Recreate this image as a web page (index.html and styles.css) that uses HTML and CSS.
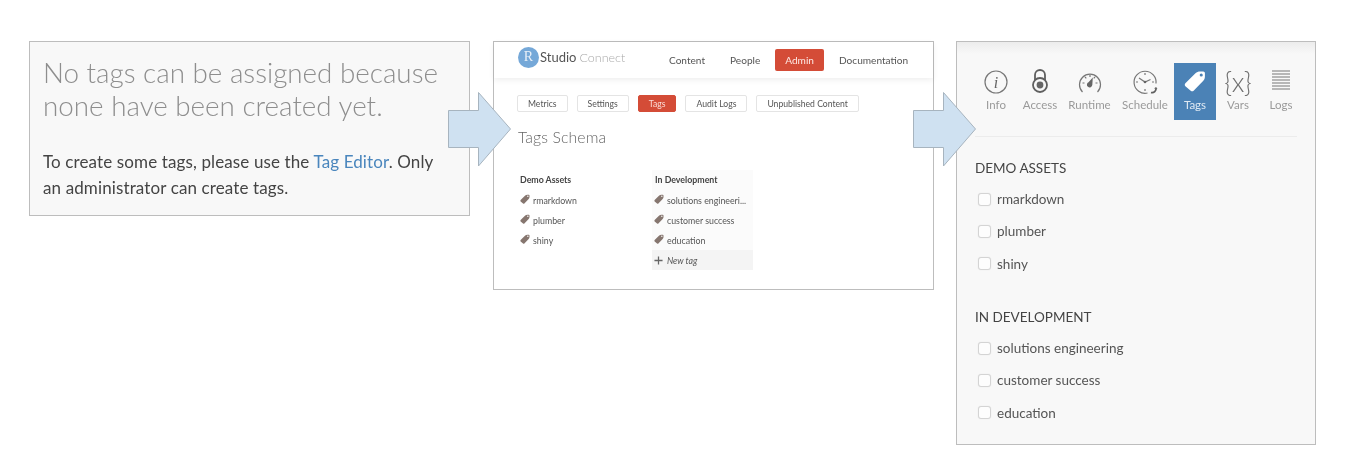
FILE: index.html
```html
<!DOCTYPE html>
<html lang="en">
<head>
<meta charset="utf-8">
<title>Tags</title>
<link rel="stylesheet" href="styles.css">
</head>
<body>
<svg width="0" height="0" class="defs">
  <defs>
    <symbol id="tag" viewBox="0 0 24 24">
      <path d="M1.500 14.500 12.500 3.500C14 2 15.500 1.500 17.500 1.500l3.500 0c1 0 1.800.8 1.800 1.800v3.700c0 2-.6 3.500-2 5L10.500 22.500c-.9.900-2.300.9-3.200 0L1.500 17.700c-.9-.9-.9-2.300 0-3.200Z" fill="currentColor"/>
      <circle cx="18.800" cy="5.500" r="1.700" class="tag-hole"/>
    </symbol>
  </defs>
</svg>
<main class="figure">
  <section class="panel empty">
    <h2 class="empty-title">No tags can be assigned because none have been created yet.</h2>
    <p class="empty-text">To create some tags, please use the <a href="#" class="link">Tag Editor</a>. Only an administrator can create tags.</p>
  </section>

  <section class="panel admin">
    <header class="topbar">
      <div class="logo"><span class="logo-r">R</span><span class="logo-studio">Studio</span><span class="logo-connect">Connect</span></div>
      <nav class="topnav">
        <span class="topnav-item first">Content</span>
        <span class="topnav-item">People</span>
        <span class="topnav-item active">Admin</span>
        <span class="topnav-item">Documentation</span>
      </nav>
    </header>
    <nav class="subnav">
      <span class="pill">Metrics</span>
      <span class="pill">Settings</span>
      <span class="pill active">Tags</span>
      <span class="pill">Audit Logs</span>
      <span class="pill">Unpublished Content</span>
    </nav>
    <h3 class="schema-title">Tags Schema</h3>
    <div class="schema">
      <div class="schema-col">
        <div class="schema-head">Demo Assets</div>
        <div class="schema-row"><svg class="mini-tag"><use href="#tag"/></svg>rmarkdown</div>
        <div class="schema-row"><svg class="mini-tag"><use href="#tag"/></svg>plumber</div>
        <div class="schema-row"><svg class="mini-tag"><use href="#tag"/></svg>shiny</div>
      </div>
      <div class="schema-col shaded">
        <div class="schema-head">In Development</div>
        <div class="schema-row"><svg class="mini-tag"><use href="#tag"/></svg>solutions engineeri...</div>
        <div class="schema-row"><svg class="mini-tag"><use href="#tag"/></svg>customer success</div>
        <div class="schema-row"><svg class="mini-tag"><use href="#tag"/></svg>education</div>
        <div class="schema-row new-tag"><svg class="plus" viewBox="0 0 10 10"><path d="M5 .5v9M.5 5h9"/></svg><em>New tag</em></div>
      </div>
    </div>
  </section>

  <section class="panel side">
    <nav class="tabs">
      <div class="tab tab-info">
        <svg class="tab-icon" viewBox="0 0 26 26"><circle cx="13" cy="13" r="11" class="ln"/><text x="13" y="18.500" class="i-glyph">i</text></svg>
        <span>Info</span>
      </div>
      <div class="tab tab-access">
        <svg class="tab-icon" viewBox="0 0 26 26"><path d="M8 11V6a5 5 0 0 1 10 0v5" class="ln thick"/><circle cx="13" cy="16" r="7" class="ln thick"/><circle cx="13" cy="16" r="3.400" class="fl"/></svg>
        <span>Access</span>
      </div>
      <div class="tab tab-runtime">
        <svg class="tab-icon" viewBox="0 0 26 26"><path d="M5.500 23a10.500 10.500 0 1 1 15 0" class="ln"/><path d="M5.500 14h2M18.500 14h2M8 8l1.300 1.300M18 8l-1.300 1.300M13 6v2" class="ln"/><path d="M15.800 8.500 15.300 16a2.700 2.700 0 1 1-3.800-2.800Z" class="fl"/></svg>
        <span>Runtime</span>
      </div>
      <div class="tab tab-schedule">
        <svg class="tab-icon" viewBox="0 0 26 26"><path d="M24 14.500A11 11 0 1 0 15.500 24" class="ln"/><path d="M7 9l6 4 5.500-2.500M13 4v2M4 13h2M20 13h2M13 20v2" class="ln"/><circle cx="13" cy="13" r="1.300" class="fl"/><path d="M19 23.500a4 4 0 0 0 5-4.500" class="ln thick"/><path d="M22 19.500l2-1.500 1.500 2Z" class="fl"/></svg>
        <span>Schedule</span>
      </div>
      <div class="tab tab-tags active">
        <svg class="tab-icon tag-icon"><use href="#tag"/></svg>
        <span>Tags</span>
      </div>
      <div class="tab tab-vars">
        <div class="vars-glyph">{x}</div>
        <span>Vars</span>
      </div>
      <div class="tab tab-logs">
        <svg class="tab-icon" viewBox="0 0 26 26"><path d="M4 2h18M4 5h18M4 8h18M4 11h18M4 14h18M4 17h18M4 20h18" class="ln"/></svg>
        <span>Logs</span>
      </div>
    </nav>
    <div class="groups">
      <div class="group">
        <h4 class="group-title">DEMO ASSETS</h4>
        <label class="check"><span class="box"></span>rmarkdown</label>
        <label class="check"><span class="box"></span>plumber</label>
        <label class="check"><span class="box"></span>shiny</label>
      </div>
      <div class="group">
        <h4 class="group-title">IN DEVELOPMENT</h4>
        <label class="check"><span class="box"></span>solutions engineering</label>
        <label class="check"><span class="box"></span>customer success</label>
        <label class="check"><span class="box"></span>education</label>
      </div>
    </div>
  </section>

  <svg class="arrow arrow-one" viewBox="0 0 64 75"><path d="M.5 18.500h30V.5L62.500 37 30.500 74V55.500H.5Z"/></svg>
  <svg class="arrow arrow-two" viewBox="0 0 64 75"><path d="M.5 18.500h30V.5L62.500 37 30.500 74V55.500H.5Z"/></svg>
</main>
</body>
</html>
```
FILE: styles.css
```css
* { box-sizing: border-box; }
html, body { margin: 0; padding: 0; background: #fff; }
body { font-family: Lato, "Open Sans", sans-serif; color: #444; width: 1345px; height: 476px; overflow: hidden; }
.defs { position: absolute; }
.tag-hole { fill: var(--hole, #fff); }
.figure { position: relative; display: flex; align-items: flex-start; gap: 23px; padding: 41px 0 0 29px; }
.panel { border: 1px solid #bdbdbd; flex: none; filter: blur(.4px); }

/* first panel */
.empty { width: 441px; height: 175px; background: #f8f8f8; padding: 14px 30px 0 13px; }
.empty-title { margin: 0 -20px 0 0; font-weight: 300; font-size: 27.800px; line-height: 33px; color: #8e8e8e; }
.empty-text { margin: 27px 0 0; font-size: 17px; line-height: 26px; color: #444; letter-spacing: .12px; }
.link { color: #4a86bd; text-decoration: none; }

/* second panel */
.admin { width: 441px; height: 249px; background: #fff; margin-right: -1px; }
.topbar { display: flex; align-items: center; height: 36px; padding: 0 0 0 24px; box-shadow: 0 2px 6px rgba(0,0,0,.07); }
.logo { display: flex; align-items: center; width: 151px; font-size: 13px; margin-top: -6px; }
.logo-r { width: 21px; height: 21px; border-radius: 50%; background: #75a8d8; color: #e8f0f8; font-family: "Liberation Serif", serif; font-size: 14px; display: flex; align-items: center; justify-content: center; margin-right: 1px; }
.logo-studio { color: #555; margin-right: 3px; }
.logo-connect { color: #aaa; font-weight: 300; font-size: 12.500px; }
.topnav { display: flex; align-items: center; gap: 15px; font-size: 10.100px; color: #555; margin-top: -1px; }
.topnav-item { height: 22px; line-height: 22px; white-space: nowrap; }
.topnav-item.first { margin-right: 10px; }
.topnav-item.active { background: #d44c37; color: #fde9e5; border-radius: 2px; padding: 0 10px; }
.subnav { display: flex; gap: 9px; padding: 17px 0 0 23px; }
.pill { height: 17px; line-height: 15px; padding: 0 10px; border: 1px solid #e4e4e4; border-radius: 2px; font-size: 8.650px; color: #555; white-space: nowrap; }
.pill.active { background: #d44c37; border-color: #d44c37; color: #fbdcd6; }
.schema-title { margin: 15px 0 0 24px; font-size: 15.800px; line-height: 19px; font-weight: 300; color: #666; letter-spacing: .1px; }
.schema { display: flex; margin: 24px 0 0 24px; }
.schema-col { width: 134px; font-size: 8.800px; color: #555; }
.schema-col.shaded { width: 101px; background: #fbfbfb; }
.schema-head { height: 20px; line-height: 20px; padding-left: 2px; font-weight: 700; color: #444; }
.shaded .schema-head { padding-left: 3px; }
.schema-row { height: 20px; display: flex; align-items: center; padding-left: 2px; white-space: nowrap; }
.mini-tag { width: 10px; height: 10px; color: #86766f; margin-right: 3px; flex: none; margin-top: -3px; }
.new-tag { background: #f4f4f4; }
.new-tag em { font-size: 8.800px; }
.plus { width: 9px; height: 9px; margin-right: 4px; stroke: #666; stroke-width: 1.400; fill: none; }

/* third panel */
.side { width: 360px; height: 404px; background: #f8f8f8; padding: 21px 18px 0 18px; background-image: linear-gradient(#ececec, #f8f8f8 12px); }
.tabs { display: flex; height: 74px; border-bottom: 1px solid #ececec; align-items: flex-start; }
.tab { display: flex; flex-direction: column; align-items: center; flex: none; height: 57px; padding-top: 6px; font-size: 11.500px; color: #9a9a9a; white-space: nowrap; }
.tab span { margin-top: 3px; line-height: 14px; }
.tab-info { width: 42px; }
.tab-access { width: 46px; }
.tab-runtime { width: 53px; }
.tab-schedule { width: 58px; }
.tab-tags { width: 42px; }
.tab-vars { width: 44px; }
.tab-logs { width: 42px; margin-right: -4px; }
.tab-icon { width: 26px; height: 26px; color: #6f6f6f; flex: none; }
.tab.active { background: #4b82b6; color: #dfe9f3; --hole: #4b82b6; }
.tab.active .tab-icon { color: #fff; }
.tab .tag-icon { width: 22px; height: 22px; margin: 1px 0 3px; }
.ln { fill: none; stroke: #777; stroke-width: 1.200; }
.thick { stroke-width: 1.800; stroke: #5f5f5f; }
.fl { fill: #666; }
.i-glyph { font-family: "Liberation Serif", serif; font-style: italic; font-size: 16px; text-anchor: middle; fill: #666; }
.vars-glyph { height: 26px; font-size: 27px; line-height: 25px; color: #6f6f6f; font-weight: 300; }
.groups { padding-top: 22px; }
.group { margin-bottom: 28px; }
.group-title { margin: 0 0 6px; font-size: 13.500px; line-height: 18px; font-weight: 400; color: #444; }
.check { display: flex; align-items: center; height: 32.300px; padding-left: 3px; font-size: 13.500px; color: #555; }
.box { width: 13px; height: 13px; border: 1px solid #d4d4d4; background: #fdfdfd; border-radius: 3px; margin-right: 6px; flex: none; box-shadow: 0 0 1px #ddd; }

/* connecting arrows */
.arrow { position: absolute; top: 91.500px; width: 64px; height: 75px; fill: #cfe1f1; stroke: #a7b4bf; stroke-width: 1; }
.arrow-one { left: 447.500px; }
.arrow-two { left: 912.500px; }
```
